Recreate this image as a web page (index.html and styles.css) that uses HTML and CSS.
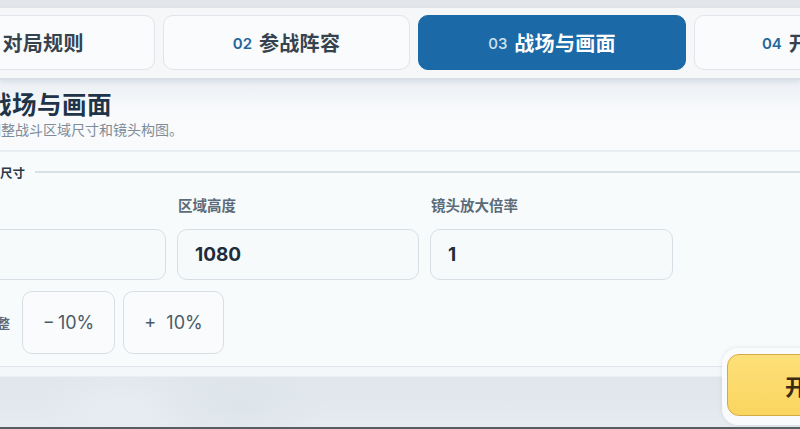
FILE: index.html
```html
<!DOCTYPE html>
<html lang="zh">
<head>
<meta charset="utf-8">
<title>战场与画面</title>
<link rel="stylesheet" href="styles.css">
</head>
<body>
<div class="screen">
  <div class="topgap"></div>
  <nav class="tabbar">
    <div class="tabs">
      <div class="tab narrow"><span class="num">01</span><span class="lbl">对局规则</span></div>
      <div class="tab narrow"><span class="num">02</span><span class="lbl">参战阵容</span></div>
      <div class="tab active"><span class="num">03</span><span class="lbl">战场与画面</span></div>
      <div class="tab last"><span class="num">04</span><span class="lbl">开始对战</span></div>
    </div>
  </nav>
  <main class="panel">
    <header class="head">
      <h1 class="title">战场与画面</h1>
      <p class="sub">调整战斗区域尺寸和镜头构图。</p>
    </header>
    <section class="fields">
      <div class="legend"><span class="legend-text">画面尺寸</span><span class="legend-line"></span></div>
      <div class="grid">
        <div class="field">
          <label class="flabel">区域宽度</label>
          <div class="input">1920</div>
        </div>
        <div class="field">
          <label class="flabel">区域高度</label>
          <div class="input">1080</div>
        </div>
        <div class="field">
          <label class="flabel">镜头放大倍率</label>
          <div class="input">1</div>
        </div>
      </div>
      <div class="adjust">
        <span class="alabel">快速调整</span>
        <button class="btn btn-minus">−&#8201;10%</button>
        <button class="btn btn-plus">+&nbsp; 10%</button>
      </div>
    </section>
  </main>
  <div class="strip"></div>
  <div class="backdrop"></div>
  <div class="start-wrap"><button class="start">开始对战</button></div>
</div>
</body>
</html>
```

FILE: styles.css
```css
* { box-sizing: border-box; }
html, body { margin: 0; padding: 0; }
body {
  width: 800px;
  height: 429px;
  overflow: hidden;
  background: #e1e8ee;
  font-family: "Noto Sans CJK SC", "Noto Sans", sans-serif;
}
.screen {
  position: relative;
  width: 800px;
  height: 429px;
  display: flex;
  flex-direction: column;
  overflow: hidden;
}
.topgap {
  height: 8px;
  flex: none;
  background: #e2e6ea;
}
.tabbar {
  flex: none;
  height: 72px;
  background: #f5f7f9;
  border-bottom: 2px solid #d9dfe5;
  padding-top: 7px;
  box-shadow: 0 2px 4px rgba(120, 140, 160, 0.15);
  position: relative;
  z-index: 1;
}
.tabs {
  display: flex;
  gap: 8px;
  margin-left: -92px;
}
.tab {
  flex: none;
  width: 268px;
  height: 55px;
  border: 1.5px solid #dfe5ea;
  border-radius: 10px;
  background: #f9fbfc;
  display: flex;
  align-items: center;
  justify-content: center;
  gap: 7px;
}
.tab.narrow { width: 247px; }
.tab.last { width: 244px; }
.num {
  font-family: "Inter", "Noto Sans", sans-serif;
  font-weight: 600;
  font-size: 15px;
  color: #24689a;
  padding-top: 2px;
}
.lbl {
  font-weight: 700;
  font-size: 20px;
  color: #36434f;
  letter-spacing: 0.3px;
}
.tab.active {
  background: #1b69a6;
  border-color: #1b69a6;
}
.tab.active .num { color: #cfe2f1; font-weight: 500; }
.tab.active .lbl { color: #ffffff; }

.panel {
  flex: none;
  height: 287px;
  background: linear-gradient(180deg, #eaeff3 0px, #f8fafc 30px, #fbfcfd 100%);
  border-bottom: 1px solid #dfe5ea;
}
.head {
  padding: 8px 0 0 0;
  margin-left: -13px;
  height: 72px;
  border-bottom: 2px solid #e8edf1;
}
.title {
  margin: 0;
  font-size: 24.5px;
  line-height: 32px;
  font-weight: 700;
  color: #1f3449;
  letter-spacing: 0.5px;
}
.sub {
  margin: -1px 0 0 0;
  font-size: 14px;
  line-height: 20px;
  color: #7e8c99;
}
.fields {
  background: #f8fbfc;
  height: 214px;
  padding-top: 12px;
}
.legend {
  display: flex;
  align-items: center;
  gap: 10px;
  margin-left: -25px;
  height: 16px;
}
.legend-text {
  font-size: 12.5px;
  font-weight: 700;
  color: #2b3a48;
}
.legend-line {
  flex: 1;
  height: 1.5px;
  background: #d9e1e8;
}
.grid {
  display: grid;
  grid-template-columns: 242px 242px 243px;
  column-gap: 11px;
  margin-left: -76px;
  margin-top: 15px;
}
.field {
  display: flex;
  flex-direction: column;
}
.flabel {
  font-size: 14.5px;
  line-height: 20px;
  font-weight: 700;
  color: #5b6b79;
  padding-left: 1px;
  margin-bottom: 14px;
}
.input {
  height: 51px;
  border: 1.5px solid #d7dfe5;
  border-radius: 10px;
  background: #f7fafb;
  display: flex;
  align-items: center;
  padding-left: 17px;
  font-family: "Inter", "Noto Sans", sans-serif;
  font-size: 19px;
  font-weight: 700;
  color: #1e2d3b;
}
.adjust {
  display: flex;
  align-items: center;
  margin-left: -76px;
  margin-top: 11px;
  gap: 8px;
}
.alabel {
  width: 86px;
  text-align: right;
  font-size: 13px;
  font-weight: 700;
  color: #5b6b79;
  margin-right: 4px;
}
.btn {
  height: 63px;
  border: 1.5px solid #d7dfe5;
  border-radius: 10px;
  background: #f9fbfc;
  font-family: "Inter", "Noto Sans", sans-serif;
  font-size: 18px;
  font-weight: 400;
  color: #4b5a68;
  padding: 0;
}
.btn-minus { width: 93px; }
.btn-plus { width: 101px; }

.strip {
  flex: none;
  height: 10px;
  background: #f4f7f9;
  border-bottom: 1px solid #e9eef2;
}
.backdrop {
  flex: 1;
  background:
    radial-gradient(ellipse 90px 40px at 240px 30px, rgba(210,220,228,0.35), transparent),
    radial-gradient(ellipse 80px 40px at 120px 25px, rgba(236,241,245,0.45), transparent),
    linear-gradient(180deg, #dfe6ec, #e5ebf0);
  border-bottom: 2px solid #5a5e62;
}
.start-wrap {
  position: absolute;
  left: 722px;
  top: 348px;
  width: 220px;
  height: 77px;
  padding: 6px 5px;
  border-radius: 16px;
  background: rgba(250, 251, 252, 0.95);
  box-shadow: 0 0 4px rgba(150,160,170,0.25);
}
.start {
  width: 204px;
  height: 62px;
  border: 1.5px solid #d3ab45;
  border-radius: 12px;
  background: linear-gradient(180deg, #fde07a 0%, #fad55f 100%);
  font-family: "Noto Sans CJK SC", sans-serif;
  font-size: 22px;
  font-weight: 700;
  color: #3a2a12;
  padding: 0;
  letter-spacing: 0;
}
```
